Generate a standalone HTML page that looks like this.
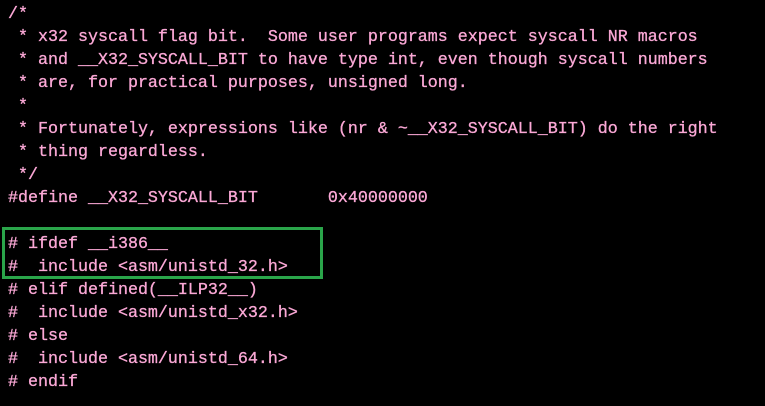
<!DOCTYPE html>
<html><head><meta charset="utf-8"><style>
html,body{margin:0;padding:0;background:#000;width:765px;height:406px;overflow:hidden}
pre{position:absolute;left:8px;top:3px;margin:0;font-family:"Liberation Mono","DejaVu Sans Mono",monospace;font-size:16.67px;line-height:23px;color:#fba8d6;white-space:pre;-webkit-text-stroke:0.3px #fba8d6}
.box{position:absolute;left:2px;top:227px;width:315px;height:46px;border:3px solid #2aa54a}
</style></head><body>
<pre>/*
 * x32 syscall flag bit.  Some user programs expect syscall NR macros
 * and __X32_SYSCALL_BIT to have type int, even though syscall numbers
 * are, for practical purposes, unsigned long.
 *
 * Fortunately, expressions like (nr &amp; ~__X32_SYSCALL_BIT) do the right
 * thing regardless.
 */
#define __X32_SYSCALL_BIT       0x40000000

# ifdef __i386__
#  include &lt;asm/unistd_32.h&gt;
# elif defined(__ILP32__)
#  include &lt;asm/unistd_x32.h&gt;
# else
#  include &lt;asm/unistd_64.h&gt;
# endif</pre>
<div class="box"></div>
</body></html>
